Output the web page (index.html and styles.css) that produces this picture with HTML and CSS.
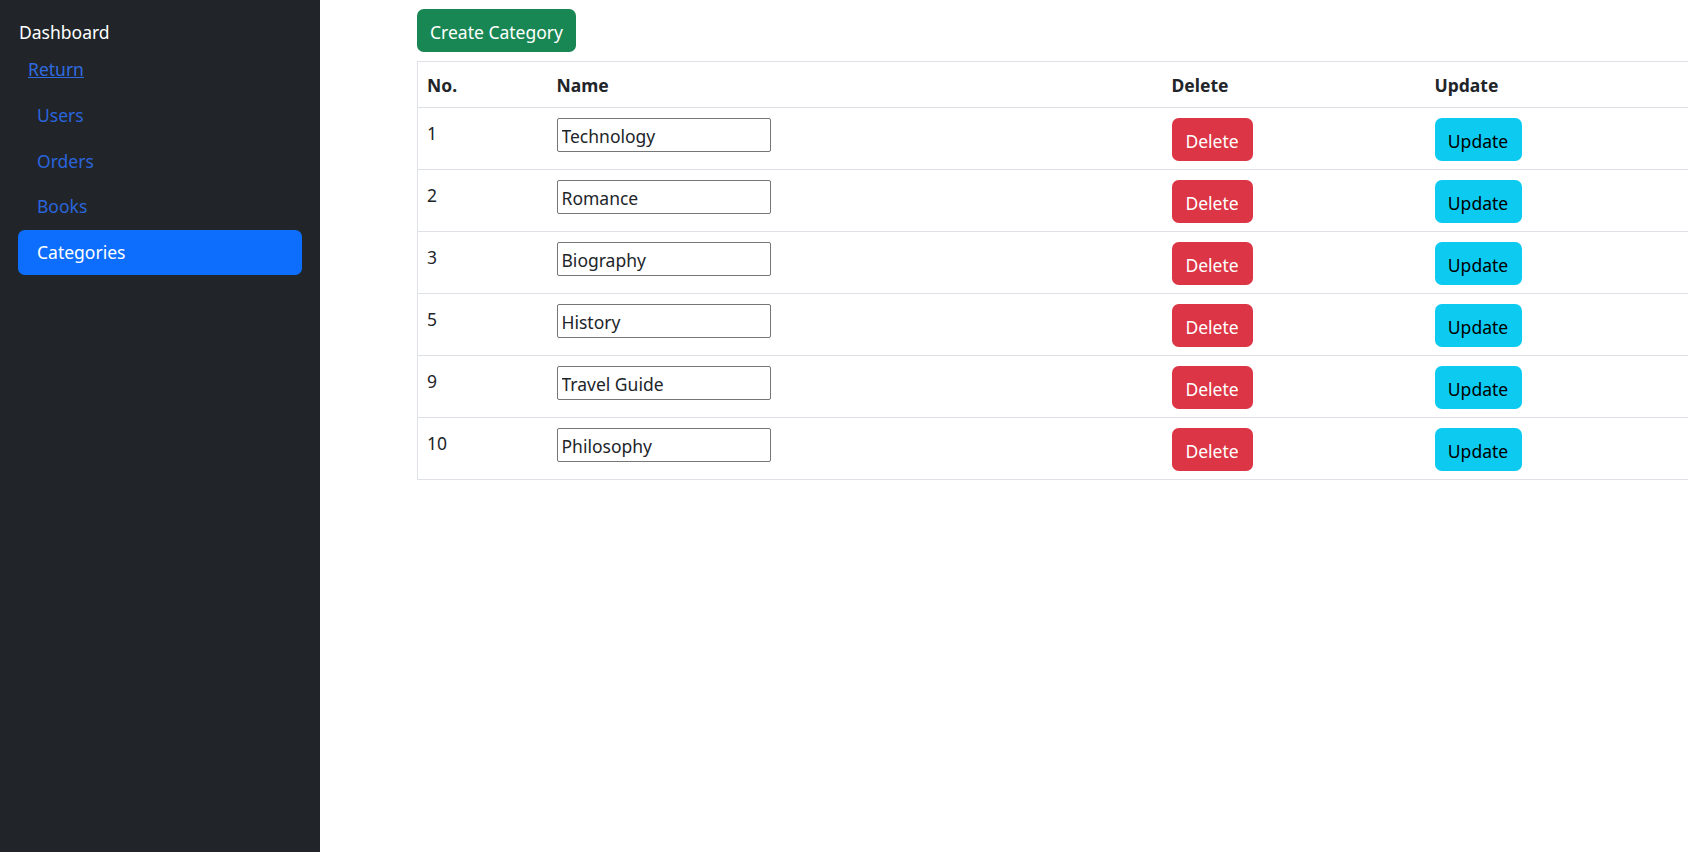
FILE: index.html
```html
<!DOCTYPE html>
<html lang="en">
<head>
<meta charset="utf-8">
<title>Categories</title>
<link rel="stylesheet" href="styles.css">
</head>
<body>
<div class="layout">
  <aside class="sidebar">
    <div class="brand">Dashboard</div>
    <a class="return" href="#">Return</a>
    <ul class="nav">
      <li><a class="nav-link" href="#">Users</a></li>
      <li><a class="nav-link" href="#">Orders</a></li>
      <li><a class="nav-link" href="#">Books</a></li>
      <li><a class="nav-link active" href="#">Categories</a></li>
    </ul>
  </aside>
  <main class="main">
    <button class="btn btn-create">Create Category</button>
    <table class="table">
      <thead>
        <tr><th class="c-no">No.</th><th class="c-name">Name</th><th class="c-del">Delete</th><th class="c-upd">Update</th></tr>
      </thead>
      <tbody>
        <tr><td>1</td><td><input class="name-input" value="Technology"></td><td><button class="btn btn-delete">Delete</button></td><td><button class="btn btn-update">Update</button></td></tr>
        <tr><td>2</td><td><input class="name-input" value="Romance"></td><td><button class="btn btn-delete">Delete</button></td><td><button class="btn btn-update">Update</button></td></tr>
        <tr><td>3</td><td><input class="name-input" value="Biography"></td><td><button class="btn btn-delete">Delete</button></td><td><button class="btn btn-update">Update</button></td></tr>
        <tr><td>5</td><td><input class="name-input" value="History"></td><td><button class="btn btn-delete">Delete</button></td><td><button class="btn btn-update">Update</button></td></tr>
        <tr><td>9</td><td><input class="name-input" value="Travel Guide"></td><td><button class="btn btn-delete">Delete</button></td><td><button class="btn btn-update">Update</button></td></tr>
        <tr><td>10</td><td><input class="name-input" value="Philosophy"></td><td><button class="btn btn-delete">Delete</button></td><td><button class="btn btn-update">Update</button></td></tr>
      </tbody>
    </table>
  </main>
</div>
</body>
</html>
```
FILE: styles.css
```css
* { box-sizing: border-box; }
html, body {
  margin: 0;
  height: 100%;
}
body {
  font-family: "Noto Sans", "Open Sans", sans-serif;
  font-size: 17.5px;
  line-height: 27px;
  color: #212529;
  background: #fff;
  overflow: hidden;
}
.layout {
  display: flex;
  height: 852px;
}
.sidebar {
  width: 320px;
  flex: 0 0 320px;
  background: #212529;
  padding: 19px 18px 18px 18px;
  display: flex;
  flex-direction: column;
}
.brand {
  color: #fff;
  line-height: 27px;
  padding-left: 1px;
}
.return {
  color: #2f6be0;
  text-decoration: underline;
  margin: 10px 0 0 10px;
  line-height: 27px;
  align-self: flex-start;
}
.nav {
  list-style: none;
  margin: 10px 0 0 0;
  padding: 0;
  display: flex;
  flex-direction: column;
  gap: 0.5px;
}
.nav-link {
  display: block;
  height: 45px;
  padding: 9px 18px 9px 19px;
  color: #2a64dc;
  text-decoration: none;
  border-radius: 6.75px;
}
.nav-link.active {
  background: #0d6efd;
  color: #fff;
}
.main {
  flex: 1;
  min-width: 0;
  overflow: hidden;
  padding: 9px 0 0 97px;
}
.btn {
  display: inline-flex;
  align-items: center;
  justify-content: center;
  height: 43px;
  border: 1px solid transparent;
  border-radius: 6.75px;
  font-family: inherit;
  font-size: 17.5px;
  line-height: 27px;
  padding: 3px 0 0 0;
  cursor: pointer;
}
.btn-create {
  width: 159px;
  background: #198754;
  color: #fff;
}
.btn-delete {
  width: 81px;
  background: #dc3545;
  color: #fff;
}
.btn-update {
  width: 87px;
  background: #0dcaf0;
  color: #000;
}
.table {
  margin-top: 9px;
  width: 1450px;
  table-layout: fixed;
  border-collapse: collapse;
  border: 1px solid #dee2e6;
}
.table th, .table td {
  text-align: left;
  vertical-align: top;
  padding: 10px 10px 8px 9px;
  border-bottom: 1px solid #dee2e6;
}
.table td:first-child {
  padding-top: 12px;
  padding-bottom: 6px;
}
.c-no { width: 130px; }
.c-name { width: 615px; }
.c-del { width: 263px; }
.c-upd { width: 442px; }
.name-input {
  display: block;
  width: 214px;
  height: 34px;
  border: 1px solid #767676;
  border-radius: 2px;
  padding: 2px 4px 0 4px;
  font-family: inherit;
  font-size: 17.5px;
  color: #212529;
  background: #fff;
}
```
